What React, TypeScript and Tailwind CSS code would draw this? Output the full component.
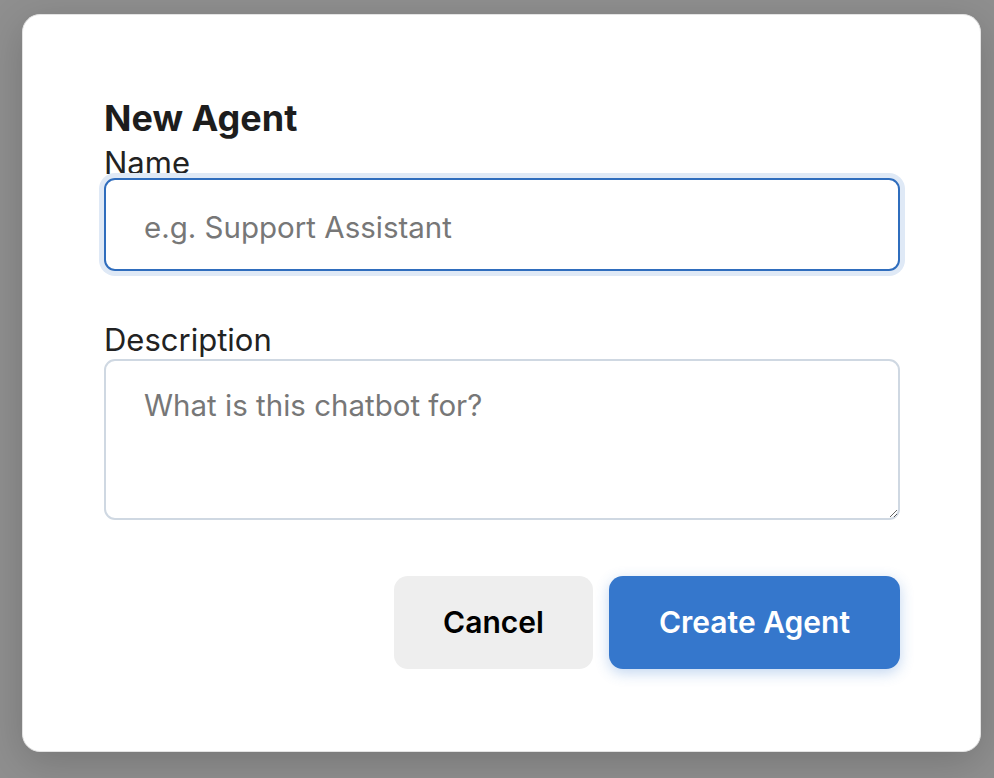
import { useState } from 'react';

export default function App() {
  const [name, setName] = useState('');
  const [description, setDescription] = useState('');

  return (
    <div
      className="min-h-screen bg-[#8f8f8f] pt-[14px] pl-[22px]"
      style={{ fontFamily: 'Inter, "Noto Sans", sans-serif' }}
    >
      <div className="w-[959px] rounded-[18px] border border-[#e3e3e3] bg-white pt-[82px] pr-[80px] pb-[82px] pl-[81px] shadow-[0_10px_40px_rgba(0,0,0,0.18)]">
        <h2 className="mb-[9px] text-[36px] leading-[42px] font-bold text-[#1d1d1d]">New Agent</h2>

        <label className="block text-[31px] leading-[30px] text-[#222]">Name</label>
        <input
          type="text"
          value={name}
          onChange={(e) => setName(e.target.value)}
          placeholder="e.g. Support Assistant"
          className="relative block h-[93px] w-full rounded-[11px] border-2 border-[#2f6dbd] px-[38px] pt-[4px] text-[29.5px] text-[#222] outline-none ring-[5px] ring-[#dfe9f6] placeholder:text-[#777]"
        />

        <label className="mt-[54px] mb-[4px] block text-[31px] leading-[30px] text-[#222]">Description</label>
        <textarea
          value={description}
          onChange={(e) => setDescription(e.target.value)}
          placeholder="What is this chatbot for?"
          className="block h-[161px] w-full rounded-[11px] border-2 border-[#cfd8e2] px-[38px] pt-[26px] text-[29.5px] leading-[36px] text-[#222] outline-none placeholder:text-[#777]"
        />

        <div className="mt-[56px] flex justify-end gap-4">
          <button className="h-[93px] w-[199px] rounded-[14px] bg-[#eeeeee] text-[30px] font-semibold text-black">
            Cancel
          </button>
          <button className="h-[93px] w-[291px] rounded-[14px] bg-[#3577cc] text-[30px] font-semibold text-white shadow-[0_4px_14px_rgba(53,119,204,0.3)]">
            Create Agent
          </button>
        </div>
      </div>
    </div>
  );
}
